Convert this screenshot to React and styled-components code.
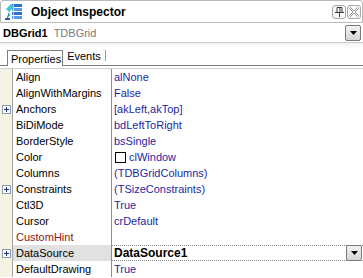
import React from "react";
import styled, { createGlobalStyle } from "styled-components";

const GlobalStyle = createGlobalStyle`
  html, body { margin: 0; padding: 0; background: #ffffff; }
  body { font-family: "Liberation Sans", Arial, sans-serif; font-size: 11px; color: #000; }
  * { box-sizing: border-box; }
`;

const Window = styled.div`
  width: 363px;
  height: 278px;
  overflow: hidden;
  background: #fff;
  display: flex;
  flex-direction: column;
`;

const TitleBar = styled.div`
  height: 23px;
  border: 1px solid #b9b9b9;
  border-radius: 3px 3px 0 0;
  display: flex;
  align-items: center;
  padding: 0 1px 0 4px;
  background: #fff;
`;

const TitleText = styled.div`
  font-weight: bold;
  font-size: 12px;
  margin-left: 8px;
  flex: 1;
  padding-top: 1px;
`;

const CapButton = styled.div`
  width: 14px;
  height: 14px;
  border: 1px solid #a8a8a8;
  border-radius: 3px;
  background: #fafafa;
  display: flex;
  align-items: center;
  justify-content: center;
  margin-left: 1px;
`;

const ComboRow = styled.div`
  height: 20px;
  border-bottom: 1px solid #c9c9c9;
  display: flex;
  align-items: center;
  padding-left: 3px;
  padding-right: 2px;
`;

const CompName = styled.span`
  font-weight: bold;
`;

const CompType = styled.span`
  color: #7a7a7a;
  margin-left: 6px;
  flex: 1;
`;

const DropButton = styled.div`
  width: 16px;
  height: 16px;
  border: 1px solid #7a7a7a;
  border-radius: 2px;
  background: linear-gradient(#f2f2f2, #d6d6d6);
  display: flex;
  align-items: center;
  justify-content: center;
  margin-top: ${(p) => p.$mt || 0}px;
`;

const TabStrip = styled.div`
  height: 23px;
  display: flex;
  align-items: flex-end;
  background: linear-gradient(#f0f0f0 0px, #fbfbfb 3px, #fff 6px);
`;

const TabLine = styled.div`
  align-self: stretch;
  border-bottom: 1px solid #7d7d7d;
  width: ${(p) => (p.$grow ? "auto" : `${p.$w}px`)};
  flex: ${(p) => (p.$grow ? 1 : "none")};
  display: flex;
  align-items: flex-end;
`;

const Tab = styled.div`
  height: 16px;
  border: 1px solid #7d7d7d;
  border-bottom: none;
  padding: 0 1px 0 3px;
  display: flex;
  align-items: center;
  line-height: 14px;
  font-size: 11px;
  background: #fff;
`;

const TabLabel = styled.div`
  height: 16px;
  display: flex;
  align-items: center;
  padding: 0 0 1px 4px;
  font-size: 11px;
  margin-bottom: 1px;
  &::after {
    content: "";
    width: 1px;
    height: 11px;
    background: #9a9a9a;
    margin-left: 4px;
  }
`;

const Spacer = styled.div`
  height: 2px;
`;

const GridTop = styled.div`
  height: 1px;
  background: #cfcfcf;
`;

const Grid = styled.div`
  flex: 1;
  display: flex;
  flex-direction: column;
`;

const Row = styled.div`
  display: flex;
  height: 16px;
`;

const Gutter = styled.div`
  width: 13px;
  background: #f6f3e4;
  border-right: 1px solid #a3a3a3;
  display: flex;
  align-items: center;
  padding-left: 2px;
`;

const NameCell = styled.div`
  width: 99px;
  border-right: 1px solid #8e8e8e;
  padding-left: 3px;
  display: flex;
  align-items: center;
  white-space: nowrap;
  overflow: hidden;
  background: ${(p) => (p.$selected ? "#e1e1e1" : "transparent")};
  color: ${(p) => (p.$hint ? "#8e1414" : "#000")};
`;

const ValueCell = styled.div`
  flex: 1;
  padding-left: 2px;
  display: flex;
  align-items: center;
  white-space: nowrap;
  overflow: hidden;
  color: #1f1fa3;
`;

const SelValueCell = styled.div`
  flex: 1;
  display: flex;
  align-items: center;
  border-top: 1px dotted #8a8a8a;
  border-bottom: 1px dotted #8a8a8a;
  padding-left: 2px;
  padding-right: 1px;
  font-weight: bold;
  font-size: 12px;
  color: #000;
`;

const SelText = styled.span`
  flex: 1;
`;

const PlusBox = styled.div`
  width: 9px;
  height: 9px;
  border: 1px solid #8c9cb5;
  background: #fff;
  position: relative;
  &::before {
    content: "";
    position: absolute;
    left: 1px;
    top: 3px;
    width: 5px;
    height: 1px;
    background: #1d2f6a;
  }
  &::after {
    content: "";
    position: absolute;
    left: 3px;
    top: 1px;
    width: 1px;
    height: 5px;
    background: #1d2f6a;
  }
`;

const ColorSwatch = styled.span`
  width: 11px;
  height: 11px;
  border: 1px solid #000;
  background: #fff;
  margin-right: 3px;
  margin-left: 1px;
`;

const InspectorIcon = () => (
  <svg width="18" height="18" viewBox="0 0 18 18">
    <rect x="7" y="1" width="10" height="3" fill="#2f6fd0" />
    <rect x="7" y="5" width="10" height="3" fill="#5a9be8" />
    <rect x="7" y="9" width="10" height="3" fill="#2f6fd0" />
    <rect x="7" y="13" width="10" height="3" fill="#5a9be8" />
    <rect x="8" y="1" width="1" height="15" fill="#ffffff" opacity="0.6" />
    <path d="M1 6 L6 1 L9 4 L4 9 Z" fill="#3cc4d8" />
    <path d="M4 9 L2 14 L1 17 L5 12 Z" fill="#1a8fb0" />
    <rect x="0" y="15" width="5" height="2" fill="#1d5aa8" />
  </svg>
);

const PinIcon = () => (
  <svg width="9" height="10" viewBox="0 0 9 10">
    <path d="M2 0.5 H7 V5.5 H2 Z M5 1 V5" fill="none" stroke="#3c3c3c" strokeWidth="1" />
    <path d="M0 5.5 H9" stroke="#3c3c3c" strokeWidth="1" />
    <path d="M4.5 6 V10" stroke="#3c3c3c" strokeWidth="1" />
  </svg>
);

const CloseIcon = () => (
  <svg width="10" height="10" viewBox="0 0 10 10">
    <path
      d="M0.5 1.5 L1.5 0.5 L5 4 L8.5 0.5 L9.5 1.5 L6 5 L9.5 8.5 L8.5 9.5 L5 6 L1.5 9.5 L0.5 8.5 L4 5 Z"
      fill="#fff"
      stroke="#8a8a8a"
      strokeWidth="0.9"
    />
  </svg>
);

const DownArrow = () => (
  <svg width="7" height="4" viewBox="0 0 7 4">
    <path d="M0 0 H7 L3.5 4 Z" fill="#000" />
  </svg>
);

const props = [
  { name: "Align", value: "alNone" },
  { name: "AlignWithMargins", value: "False" },
  { name: "Anchors", value: "[akLeft,akTop]", expand: true },
  { name: "BiDiMode", value: "bdLeftToRight" },
  { name: "BorderStyle", value: "bsSingle" },
  { name: "Color", value: "clWindow", swatch: true },
  { name: "Columns", value: "(TDBGridColumns)" },
  { name: "Constraints", value: "(TSizeConstraints)", expand: true },
  { name: "Ctl3D", value: "True" },
  { name: "Cursor", value: "crDefault" },
  { name: "CustomHint", value: "", hint: true },
  { name: "DataSource", value: "DataSource1", expand: true, selected: true },
  { name: "DefaultDrawing", value: "True" },
];

export default function App() {
  return (
    <Window>
      <GlobalStyle />
      <TitleBar>
        <InspectorIcon />
        <TitleText>Object Inspector</TitleText>
        <CapButton>
          <PinIcon />
        </CapButton>
        <CapButton>
          <CloseIcon />
        </CapButton>
      </TitleBar>
      <ComboRow>
        <CompName>DBGrid1</CompName>
        <CompType>TDBGrid</CompType>
        <DropButton $mt={1}>
          <DownArrow />
        </DropButton>
      </ComboRow>
      <TabStrip>
        <TabLine $w={7} />
        <Tab>Properties</Tab>
        <TabLine $grow>
          <TabLabel>Events</TabLabel>
        </TabLine>
      </TabStrip>
      <Spacer />
      <GridTop />
      <Grid>
        {props.map((p) => (
          <Row key={p.name}>
            <Gutter>{p.expand && <PlusBox />}</Gutter>
            <NameCell $selected={p.selected} $hint={p.hint}>
              {p.name}
            </NameCell>
            {p.selected ? (
              <SelValueCell>
                <SelText>{p.value}</SelText>
                <DropButton>
                  <DownArrow />
                </DropButton>
              </SelValueCell>
            ) : (
              <ValueCell>
                {p.swatch && <ColorSwatch />}
                {p.value}
              </ValueCell>
            )}
          </Row>
        ))}
      </Grid>
    </Window>
  );
}
